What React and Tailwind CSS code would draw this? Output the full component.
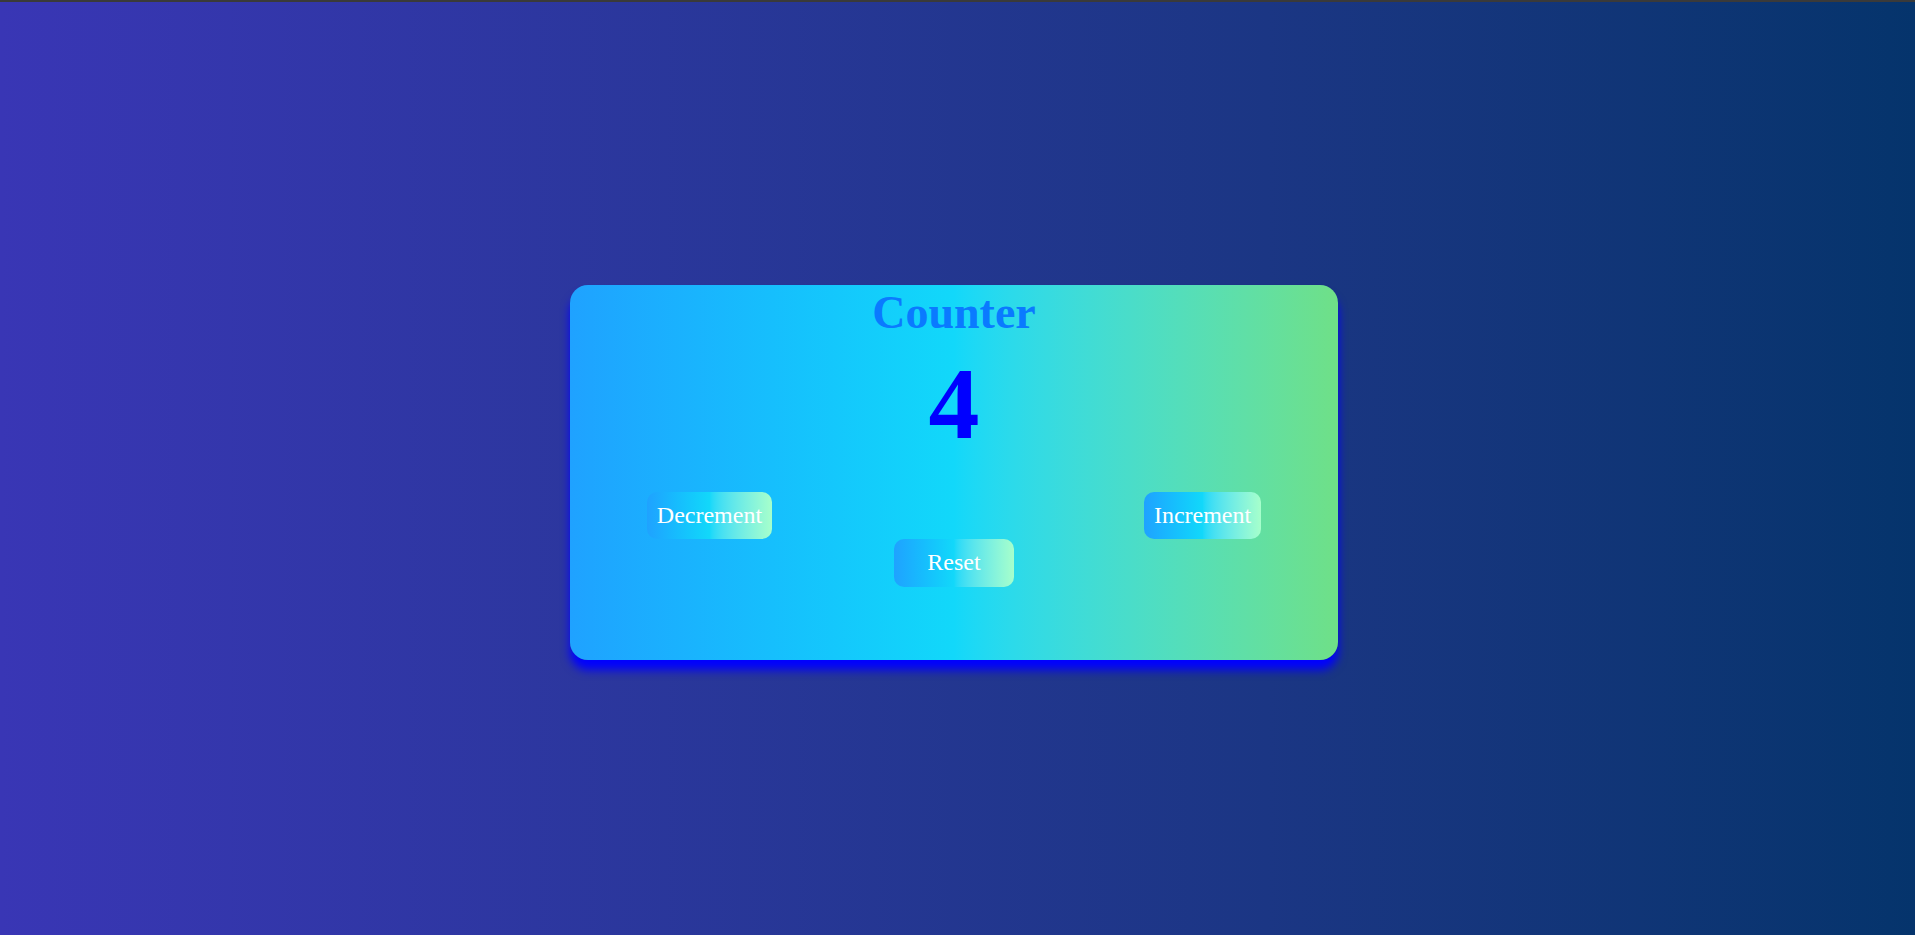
import React, { useState } from "react";

export default function App() {
  const [count, setCount] = useState(4);
  const btn =
    "rounded-[10px] bg-gradient-to-r from-[#1fa2ff] via-[#12d8fa] to-[#a6ffcb] p-[10px] text-[24px] leading-[1.15] text-white";
  return (
    <div
      className="flex h-screen w-full flex-col overflow-hidden"
      style={{ fontFamily: '"Liberation Serif", "Times New Roman", serif' }}
    >
      <div className="h-[2px] w-full bg-[#3a3a3a]" />
      <div className="flex flex-1 items-center justify-center bg-gradient-to-r from-[#3936b5] to-[#05346c] pt-[7px] pr-[7px]">
        <div className="flex h-[375px] w-[768px] flex-col items-center rounded-[18px] bg-gradient-to-r from-[#1fa2ff] via-[#12d8fa] to-[#6fe087] shadow-[0_10px_10px_#0000ff]">
          <h1 className="m-0 mt-[2px] text-[46px] font-bold leading-[1.15] text-[#0a7aff]">
            Counter
          </h1>
          <div className="mt-[6px] text-[102px] font-bold leading-[1.15] text-[#0000ff]">
            {count}
          </div>
          <div className="mt-[29px] flex w-[80%] justify-between">
            <button className={btn} onClick={() => setCount((c) => c - 1)}>
              Decrement
            </button>
            <button className={btn} onClick={() => setCount((c) => c + 1)}>
              Increment
            </button>
          </div>
          <button
            className={btn + " w-[120px] text-center"}
            onClick={() => setCount(0)}
          >
            Reset
          </button>
        </div>
      </div>
    </div>
  );
}
